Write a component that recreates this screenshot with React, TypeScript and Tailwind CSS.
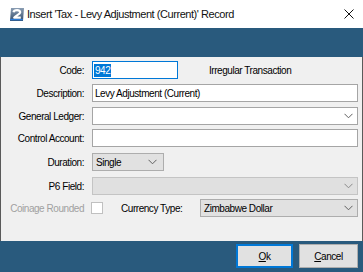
import React from "react"

const font = { fontFamily: '"Liberation Sans", Arial, sans-serif' }

function Chevron({ color = "#606060" }: { color?: string }) {
  return (
    <svg width="9" height="6" viewBox="0 0 9 6" className="shrink-0">
      <path d="M0.5 0.8 L4.5 4.8 L8.5 0.8" fill="none" stroke={color} strokeWidth="1" />
    </svg>
  )
}

function AppIcon() {
  return (
    <svg width="16" height="15" viewBox="0 0 16 15">
      <defs>
        <linearGradient id="ig" x1="0" y1="0" x2="0" y2="1">
          <stop offset="0" stopColor="#8a9db3" />
          <stop offset="1" stopColor="#34506f" />
        </linearGradient>
      </defs>
      <path d="M2 1 H15 L14 14 H1 Z" fill="url(#ig)" />
      <path d="M4.5 5.2 C5 2.6 11.5 2.4 11.2 5.4 C11 7.4 7 8.3 5.2 10.6 H11.8" fill="none" stroke="#fff" strokeWidth="2.2" strokeLinejoin="round" />
      <path d="M1.2 12.6 H13.8" stroke="#2b7bd6" strokeWidth="1.4" />
    </svg>
  )
}

function Label({ children, muted }: { children: React.ReactNode; muted?: boolean }) {
  return (
    <div className={`w-[84px] shrink-0 pr-[1px] text-right ${muted ? "text-[#a0a0a0]" : "text-black"}`}>
      {children}
    </div>
  )
}

export default function App() {
  return (
    <div className="w-[363px] h-[272px] bg-white flex flex-col text-[10px] tracking-[-0.45px] overflow-hidden" style={font}>
      {/* title bar */}
      <div className="h-[28px] flex items-center bg-white shrink-0">
        <div className="ml-[9px] mt-[1px]">
          <AppIcon />
        </div>
        <span className="ml-[2px] text-[11px] tracking-[-0.45px] text-[#111]">
          Insert 'Tax - Levy Adjustment (Current)' Record
        </span>
        <svg className="ml-auto mr-[9px]" width="10" height="10" viewBox="0 0 10 10">
          <path d="M0.5 0.5 L9.5 9.5 M9.5 0.5 L0.5 9.5" stroke="#111" strokeWidth="1" />
        </svg>
      </div>

      {/* blue band */}
      <div className="h-[29px] bg-[#295a7d] shrink-0" />

      {/* form */}
      <div className="h-[184px] bg-[#f0f0f0] border-x border-[#5a5a5a] flex flex-col shrink-0">
        <div className="flex items-center h-[18px] mt-[4px]">
          <Label>Code:</Label>
          <div className="ml-[7px] w-[86px] h-[18px] bg-white border border-[#0078d7] flex items-center px-[1px]">
            <span className="bg-[#0078d7] text-white leading-[13px] px-[1px]">942</span>
          </div>
          <span className="ml-[31px]">Irregular Transaction</span>
        </div>

        <div className="flex items-center h-[18px] mt-[5px]">
          <Label>Description:</Label>
          <div className="ml-[7px] w-[266px] h-[18px] bg-white border border-[#a5a5a5] flex items-center px-[2px]">
            Levy Adjustment (Current)
          </div>
        </div>

        <div className="flex items-center h-[18px] mt-[5px]">
          <Label>General Ledger:</Label>
          <div className="ml-[7px] w-[266px] h-[18px] bg-white border border-[#a5a5a5] flex items-center justify-end pr-[4px]">
            <Chevron />
          </div>
        </div>

        <div className="flex items-center h-[18px] mt-[4px]">
          <Label>Control Account:</Label>
          <div className="ml-[7px] w-[266px] h-[18px] bg-white border border-[#a5a5a5]" />
        </div>

        <div className="flex items-center h-[18px] mt-[6px]">
          <Label>Duration:</Label>
          <div className="ml-[7px] w-[72px] h-[18px] bg-[#e1e1e1] border border-[#adadad] flex items-center justify-between pl-[3px] pr-[6px]">
            <span>Single</span>
            <Chevron />
          </div>
        </div>

        <div className="flex items-center h-[18px] mt-[6px]">
          <Label>P6 Field:</Label>
          <div className="ml-[7px] w-[266px] h-[18px] bg-[#e0e0e0] border border-[#c4c4c4] flex items-center justify-end pr-[4px]">
            <Chevron color="#8a8a8a" />
          </div>
        </div>

        <div className="flex items-center h-[18px] mt-[4px]">
          <Label muted>Coinage Rounded</Label>
          <div className="ml-[6px] w-[12px] h-[12px] bg-white border border-[#c0c0c0] shrink-0" />
          <span className="ml-[18px] w-[79px] shrink-0">Currency Type:</span>
          <div className="w-[158px] h-[18px] bg-[#e1e1e1] border border-[#adadad] flex items-center justify-between pl-[3px] pr-[4px]">
            <span>Zimbabwe Dollar</span>
            <Chevron />
          </div>
        </div>
      </div>

      {/* footer */}
      <div className="flex-1 bg-[#295a7d] flex items-start justify-end pt-[3px] pr-[5px] gap-[6px]">
        <button className="w-[57px] h-[24px] bg-[#e1e1e1] border border-[#0078d7] outline outline-1 outline-[#0078d7] -outline-offset-2 text-[10px] text-black">
          <span className="underline underline-offset-1">O</span>k
        </button>
        <button className="w-[59px] h-[24px] bg-[#e1e1e1] border border-[#adadad] text-[10px] text-black">
          <span className="underline underline-offset-1">C</span>ancel
        </button>
      </div>
    </div>
  )
}
